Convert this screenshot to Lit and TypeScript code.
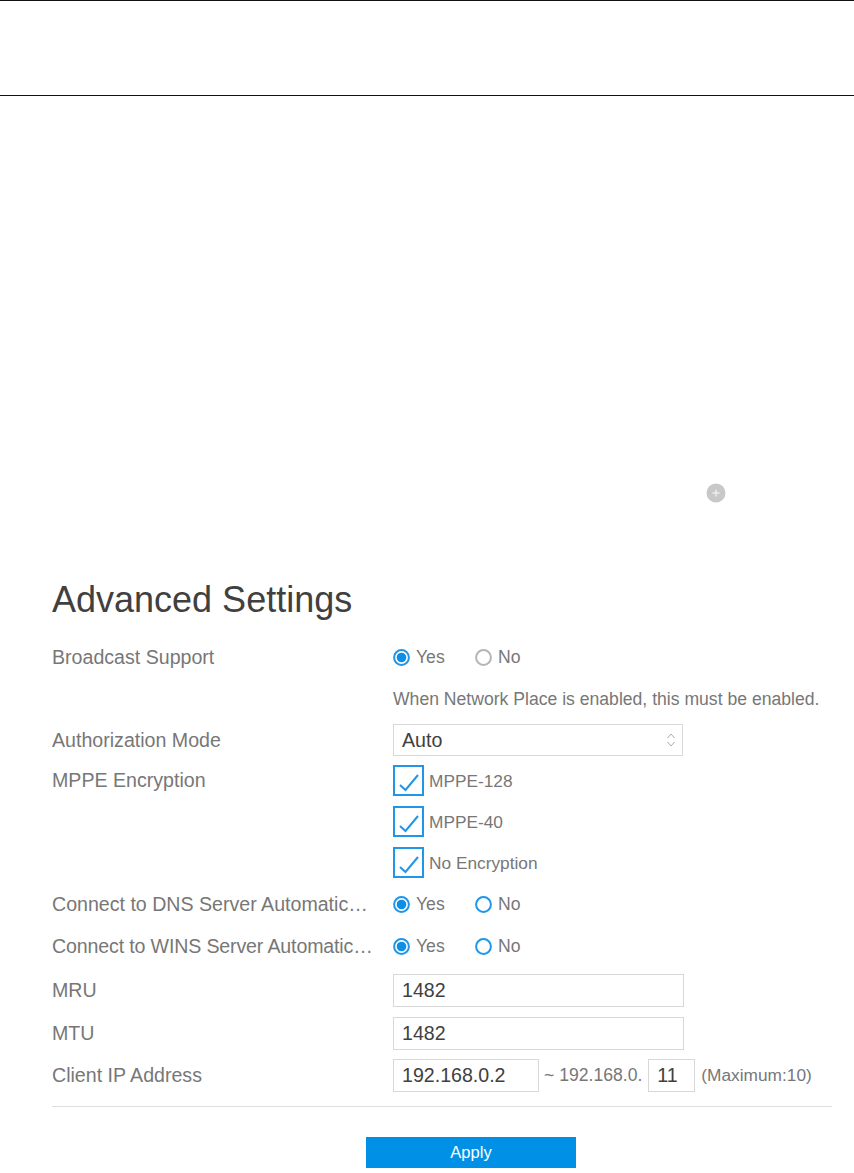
import {LitElement, html, svg, css} from 'lit';
import {customElement} from 'lit/decorators.js';

@customElement('app-root')
export class AppRoot extends LitElement {
  static styles = css`
    :host {
      display: block;
      min-height: 1173px;
      background: #fff;
      font-family: 'Liberation Sans', Arial, sans-serif;
      color: #777;
    }
    .top {
      height: 94px;
      border-top: 1px solid #111;
      border-bottom: 1px solid #111;
    }
    .add-row {
      display: flex;
      justify-content: flex-end;
      padding: 387px 128px 0 0;
      height: 20px;
    }
    .add {
      width: 20px;
      height: 20px;
    }
    .content {
      margin: 0 22px 0 52px;
    }
    h2 {
      margin: 77px 0 0;
      font-weight: 400;
      font-size: 36px;
      line-height: 40px;
      color: #404040;
    }
    .rows {
      margin-top: 16px;
    }
    .row {
      display: grid;
      grid-template-columns: 341px 1fr;
      align-items: center;
      height: 41px;
      font-size: 19.6px;
    }
    .h40 { height: 40px; }
    .h42 { height: 42px; }
    .h43 { height: 43px; }
    .h45 { height: 45px; }
    .label {
      white-space: nowrap;
      overflow: hidden;
      text-overflow: ellipsis;
      width: 325px;
    }
    .label-wins {
      letter-spacing: -0.15px;
    }
    .ctl {
      display: flex;
      align-items: center;
      white-space: nowrap;
    }
    .opt {
      display: flex;
      align-items: center;
      gap: 6px;
      width: 82px;
      font-size: 17.6px;
    }
    .hint {
      font-size: 17.6px;
    }
    .box {
      box-sizing: border-box;
      height: 33px;
      border: 1px solid #d8d8d8;
      padding: 0 8px;
      font-size: 19.6px;
      line-height: 31px;
      color: #404040;
      background: #fff;
    }
    .select {
      width: 290px;
      height: 32px;
      padding-right: 6px;
      display: flex;
      align-items: center;
      justify-content: space-between;
    }
    .wide { width: 291px; }
    .ip { width: 146px; }
    .end { width: 47px; }
    .range { margin: 0 6px 0 5px; font-size: 17.6px; }
    .max { margin-left: 6px; font-size: 17.3px; }
    .check {
      display: flex;
      align-items: center;
      gap: 5px;
      font-size: 17.3px;
    }
    .check-text { margin-top: 2px; }
    .tick {
      box-sizing: border-box;
      width: 31px;
      height: 31px;
      border: 2px solid #2196e8;
    }
    .tick svg, .select svg { display: block; }
    .rule {
      border-top: 1px solid #ddd;
      margin-top: 9px;
    }
    .actions {
      display: flex;
      justify-content: center;
      padding: 30px 0 0 58px;
    }
    .apply {
      width: 210px;
      height: 31px;
      border: 0;
      padding: 0;
      background: #0091e6;
      color: #fff;
      font: 400 16.5px 'Liberation Sans', Arial, sans-serif;
    }
  `;

  private radio(on: boolean, disabled = false) {
    const color = disabled ? '#b5b5b5' : '#2196e8';
    return html`<svg width="17" height="17" viewBox="0 0 17 17">
      <circle cx="8.5" cy="8.5" r="7.4" fill="#fff" stroke=${color} stroke-width="2"></circle>
      ${on ? svg`<circle cx="8.5" cy="8.5" r="4.8" fill="#0f8ee6"></circle>` : ''}
    </svg>`;
  }

  private yesNo(noDisabled = false) {
    return html`<div class="ctl">
      <span class="opt">${this.radio(true)}Yes</span>
      <span class="opt">${this.radio(false, noDisabled)}No</span>
    </div>`;
  }

  private check(text: string) {
    return html`<div class="check">
      <span class="tick">
        <svg width="27" height="27" viewBox="0 0 27 27">
          <path d="M5 18l5.5 5L23 8" fill="none" stroke="#2196e8" stroke-width="2"></path>
        </svg>
      </span>
      <span class="check-text">${text}</span>
    </div>`;
  }

  render() {
    return html`
      <div class="top"></div>
      <div class="add-row">
        <svg class="add" viewBox="0 0 20 20">
          <circle cx="10" cy="10" r="9.5" fill="#c8c8c8"></circle>
          <path d="M10 6.5v7M6.5 10h7" stroke="#eee" stroke-width="1.4"></path>
        </svg>
      </div>
      <div class="content">
        <h2>Advanced Settings</h2>
        <div class="rows">
          <div class="row h42"><span class="label">Broadcast Support</span>${this.yesNo(true)}</div>
          <div class="row h42"><span></span><span class="hint">When Network Place is enabled, this must be enabled.</span></div>
          <div class="row h40">
            <span class="label">Authorization Mode</span>
            <div class="box select">
              Auto
              <svg width="10" height="16" viewBox="0 0 10 16">
                <path d="M1.5 6L5 2l3.5 4M1.5 10L5 14l3.5-4" fill="none" stroke="#aaa" stroke-width="1"></path>
              </svg>
            </div>
          </div>
          <div class="row"><span class="label">MPPE Encryption</span>${this.check('MPPE-128')}</div>
          <div class="row"><span></span>${this.check('MPPE-40')}</div>
          <div class="row"><span></span>${this.check('No Encryption')}</div>
          <div class="row h42"><span class="label">Connect to DNS Server Automatically</span>${this.yesNo()}</div>
          <div class="row h43"><span class="label label-wins">Connect to WINS Server Automatically</span>${this.yesNo()}</div>
          <div class="row h45"><span class="label">MRU</span><div class="box wide">1482</div></div>
          <div class="row"><span class="label">MTU</span><div class="box wide">1482</div></div>
          <div class="row h43">
            <span class="label">Client IP Address</span>
            <div class="ctl">
              <div class="box ip">192.168.0.2</div>
              <span class="range">~ 192.168.0.</span>
              <div class="box end">11</div>
              <span class="max">(Maximum:10)</span>
            </div>
          </div>
        </div>
        <div class="rule"></div>
        <div class="actions"><button class="apply">Apply</button></div>
      </div>
    `;
  }
}
